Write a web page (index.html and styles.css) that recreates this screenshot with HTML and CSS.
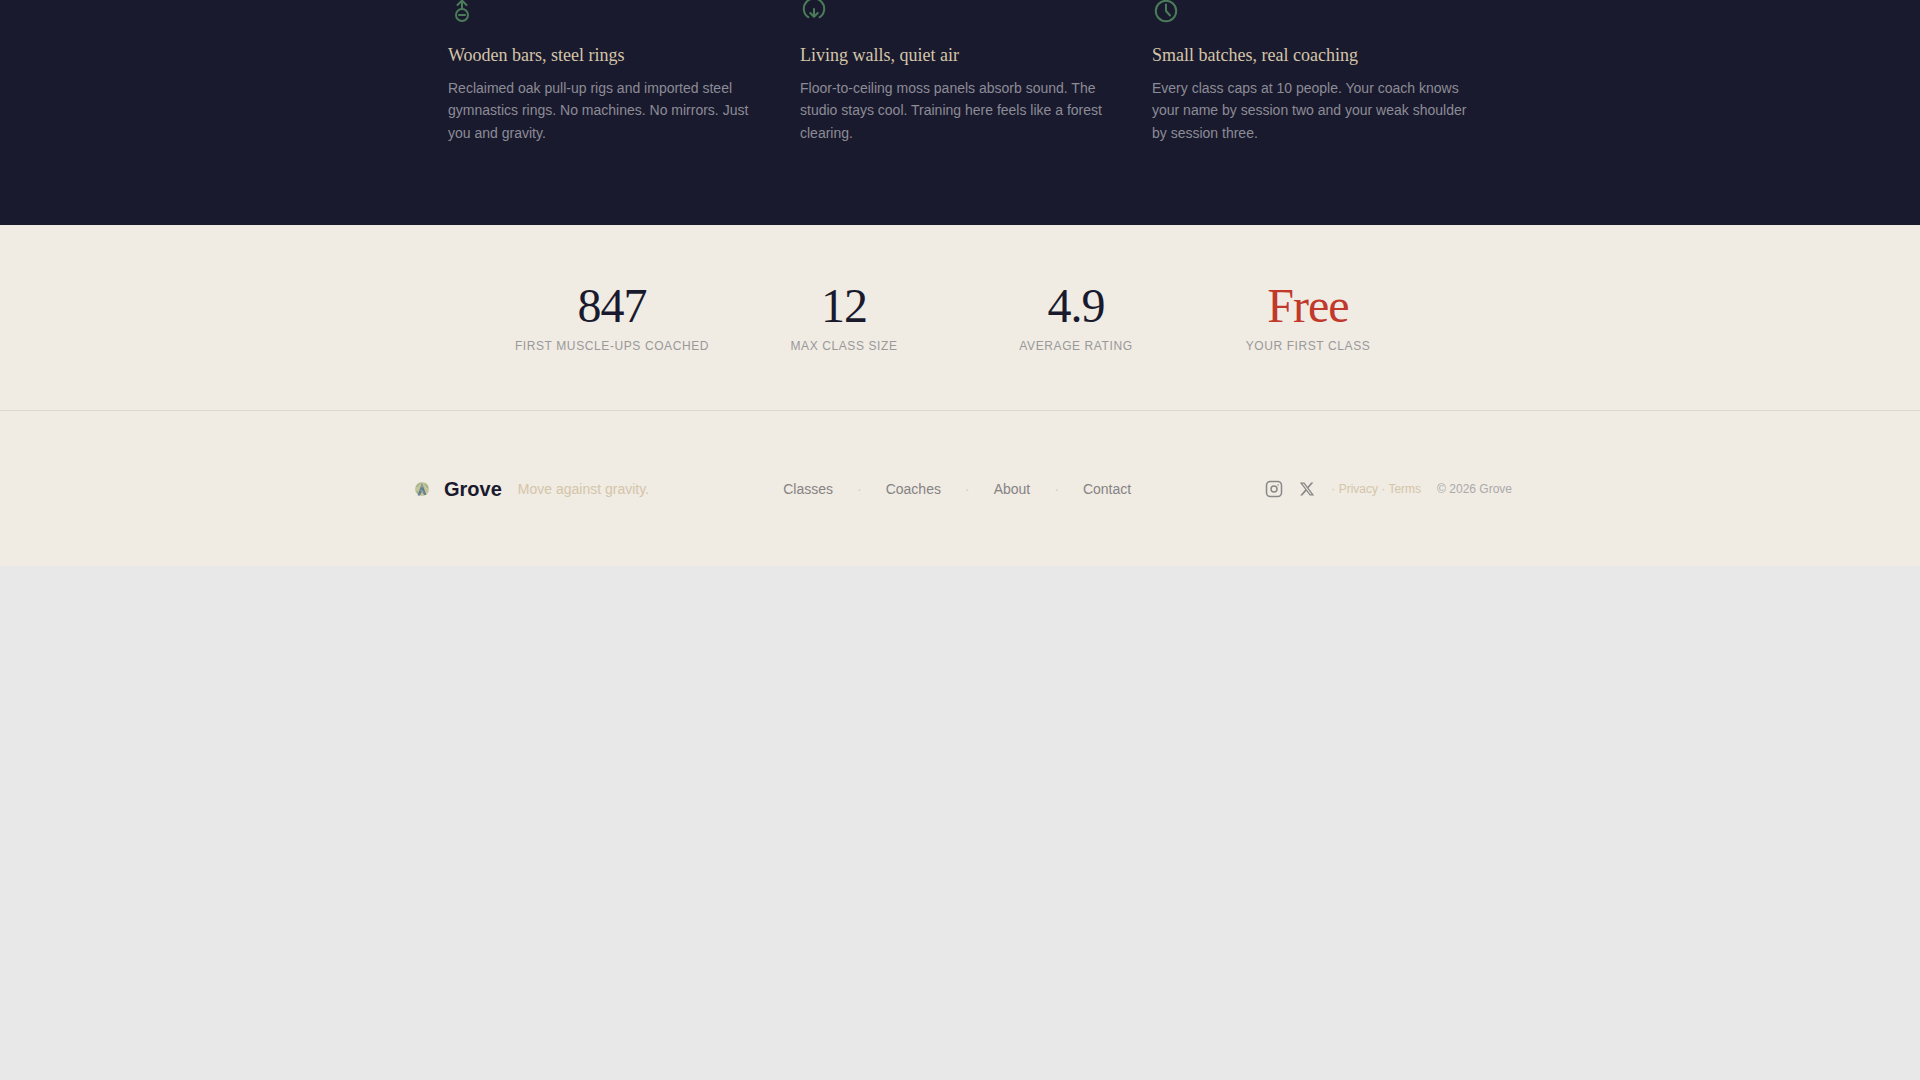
FILE: index.html
```html
<!DOCTYPE html>
<html lang="en">
<head>
<meta charset="utf-8">
<meta name="viewport" content="width=device-width, initial-scale=1">
<title>Grove</title>
<link rel="stylesheet" href="styles.css">
</head>
<body>
<main>
  <section class="features">
    <div class="features-grid">
      <article class="feature">
        <svg class="feature-icon" viewBox="0 3 28 25" aria-hidden="true"><circle cx="14" cy="18" r="6"/><path d="M11 18h6M14 12V4M9.500 8L14 3.500L18.500 8"/></svg>
        <h3>Wooden bars, steel rings</h3>
        <p>Reclaimed oak pull-up rigs and imported steel gymnastics rings. No machines. No mirrors. Just you and gravity.</p>
      </article>
      <article class="feature">
        <svg class="feature-icon" viewBox="0 3 28 25" aria-hidden="true"><path d="M8.300 20.200A10.200 10.200 0 1 1 19.700 20.200M14 12v7.500M10.300 16l3.700 3.700L17.700 16"/></svg>
        <h3>Living walls, quiet air</h3>
        <p>Floor-to-ceiling moss panels absorb sound. The studio stays cool. Training here feels like a forest clearing.</p>
      </article>
      <article class="feature">
        <svg class="feature-icon" viewBox="0 3 28 25" aria-hidden="true"><circle cx="14" cy="14" r="10.200"/><path d="M14 7.500V14l4 4.500"/></svg>
        <h3>Small batches, real coaching</h3>
        <p>Every class caps at 10 people. Your coach knows your name by session two and your weak shoulder by session three.</p>
      </article>
    </div>
  </section>
  <section class="stats">
    <dl class="stats-grid">
      <div class="stat"><dd>847</dd><dt>First muscle-ups coached</dt></div>
      <div class="stat"><dd>12</dd><dt>Max class size</dt></div>
      <div class="stat"><dd>4.9</dd><dt>Average rating</dt></div>
      <div class="stat stat-accent"><dd>Free</dd><dt>Your first class</dt></div>
    </dl>
  </section>
</main>
<footer class="footer">
  <div class="footer-inner">
    <div class="brand">
      <svg class="brand-mark" viewBox="0 0 28 28" aria-hidden="true"><circle cx="14" cy="14" r="7" fill="#c3c69c"/><path d="M8.500 12q1.500-3 4-3.500M16.500 9q3 1 3 4M8.800 16q1 2 2 2.500" fill="none" stroke="#9fae80" stroke-width="1.200"/><path d="M14 8l1.500 4 2.900 8h-2.200L14 16.500l-2.200 4H9.600L12.500 12z" fill="#647f90"/><path d="M14 10v2.500M12.500 15l3 2" stroke="#a9b8a4" stroke-width="1"/></svg>
      <a class="brand-name" href="#">Grove</a>
      <span class="tagline">Move against gravity.</span>
    </div>
    <nav class="footer-nav" aria-label="Footer">
      <a href="#">Classes</a><span class="dot">·</span>
      <a href="#">Coaches</a><span class="dot">·</span>
      <a href="#">About</a><span class="dot">·</span>
      <a href="#">Contact</a>
    </nav>
    <div class="footer-end">
      <a class="social" href="#" aria-label="Instagram"><svg width="18" height="18" viewBox="0 0 24 24" fill="none" stroke="currentColor" stroke-width="2"><rect x="2" y="2" width="20" height="20" rx="5"/><circle cx="12" cy="12" r="4"/><circle cx="17.500" cy="6.500" r="1" fill="currentColor" stroke="none"/></svg></a>
      <a class="social" href="#" aria-label="X"><svg width="16" height="16" viewBox="0 0 24 24" fill="currentColor"><path d="M18.244 2.250h3.308l-7.227 8.260 8.502 11.240H16.170l-5.214-6.817L4.990 21.750H1.680l7.730-8.835L1.254 2.250H8.080l4.713 6.231zm-1.161 17.520h1.833L7.084 4.126H5.117z"/></svg></a>
      <span class="legal">· <a href="#">Privacy</a> · <a href="#">Terms</a></span>
      <small class="copyright">© 2026 Grove</small>
    </div>
  </div>
</footer>
</body>
</html>
```
FILE: styles.css
```css
* {
  box-sizing: border-box;
  margin: 0;
}

body {
  background: #e8e8e8;
  color: #1a1a2e;
  font-family: "Liberation Sans", Arial, sans-serif;
  font-size: 14px;
}

a {
  color: inherit;
  text-decoration: none;
}

svg {
  display: block;
}

.features {
  background: #1a1a2e;
  padding: 0 24px 81px;
}

.features-grid {
  display: grid;
  grid-template-columns: repeat(3, 1fr);
  gap: 32px;
  max-width: 1024px;
  margin: 0 auto;
}

.feature-icon {
  width: 28px;
  height: 25px;
  margin-bottom: 16px;
  fill: none;
  stroke: #4a7c59;
  stroke-width: 2;
  stroke-linecap: round;
  stroke-linejoin: round;
}

.feature h3 {
  margin-bottom: 8px;
  color: #d4c5a9;
  font-family: "Liberation Serif", "Times New Roman", serif;
  font-size: 18px;
  font-weight: 400;
  line-height: 28px;
}

.feature p {
  color: #8c8c96;
  line-height: 1.6;
}

.stats {
  background: #f0ebe3;
  padding: 56px 24px;
}

.stats-grid {
  display: grid;
  grid-template-columns: repeat(4, 1fr);
  gap: 32px;
  max-width: 896px;
  margin: 0 auto;
  text-align: center;
}

.stat dd {
  margin-bottom: 8px;
  font-family: "Liberation Serif", "Times New Roman", serif;
  font-size: 48px;
  letter-spacing: -1px;
  line-height: 50px;
}

.stat dt {
  color: #999;
  font-size: 12px;
  letter-spacing: 0.05em;
  line-height: 15px;
  text-transform: uppercase;
}

.stat-accent dd {
  color: #c0392b;
}

.footer {
  background: #f0ebe3;
  border-top: 1px solid #dcd9d4;
  padding: 64px 24px 63px;
}

.footer-inner {
  display: flex;
  align-items: center;
  justify-content: space-between;
  max-width: 1104px;
  margin: 0 auto;
}

.brand {
  display: flex;
  align-items: center;
}

.brand-mark {
  width: 28px;
  height: 28px;
  margin-right: 8px;
}

.brand-name {
  margin-right: 16px;
  font-size: 20px;
  font-weight: 700;
}

.tagline {
  color: #d4c5a9;
}

.footer-nav {
  display: flex;
  align-items: center;
  gap: 24px;
  color: #858383;
}

.dot {
  color: #d2cdc4;
}

.footer-end {
  display: flex;
  align-items: center;
  gap: 16px;
  font-size: 12px;
}

.social {
  color: #888;
}

.legal {
  color: #d4c5a9;
}

.copyright {
  color: #aaa;
  font-size: 12px;
}
```
